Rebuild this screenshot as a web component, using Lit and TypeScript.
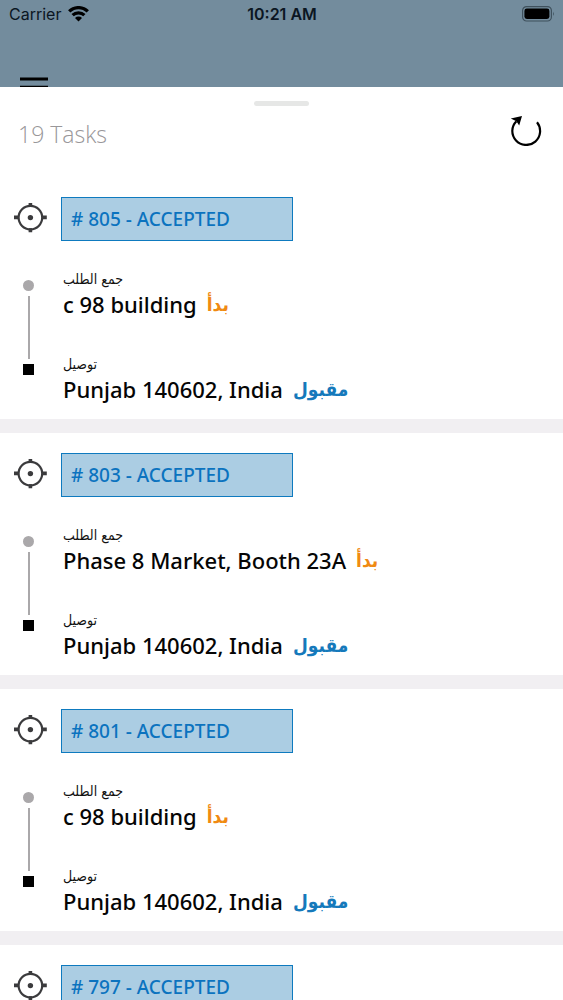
import { LitElement, html, css } from "lit";
import { customElement, property } from "lit/decorators.js";

interface Task {
  id: number;
  pickup: string;
  drop: string;
}

const TASKS: Task[] = [
  { id: 805, pickup: "c 98 building", drop: "Punjab 140602, India" },
  { id: 803, pickup: "Phase 8 Market, Booth 23A", drop: "Punjab 140602, India" },
  { id: 801, pickup: "c 98 building", drop: "Punjab 140602, India" },
  { id: 797, pickup: "c 98 building", drop: "Punjab 140602, India" },
];

@customElement("status-bar")
export class StatusBar extends LitElement {
  static styles = css`
    :host {
      display: grid;
      grid-template-columns: 1fr auto 1fr;
      align-items: center;
      height: 28px;
      padding: 0 8px 0 9px;
      font: 400 16px/20px Inter, sans-serif;
      color: #0b1622;
    }
    .carrier {
      display: flex;
      align-items: center;
      gap: 7px;
    }
    .time {
      font-size: 16px;
      font-weight: 600;
    }
    .battery {
      justify-self: end;
    }
    svg {
      display: block;
    }
  `;

  render() {
    return html`
      <div class="carrier">
        <span>Carrier</span>
        <svg width="21" height="16" viewBox="0 0 21 16" aria-hidden="true">
          <g fill="none" stroke="#000" stroke-width="3.2">
            <path d="M1.2 5.4a13.2 13.2 0 0 1 18.6 0" />
            <path d="M4.6 9.2a8.4 8.4 0 0 1 11.8 0" />
          </g>
          <path d="M7 12a5 5 0 0 1 7 0L10.5 15.4z" />
        </svg>
      </div>
      <span class="time">10:21 AM</span>
      <svg class="battery" width="33" height="16" viewBox="0 0 33 16" aria-hidden="true">
        <rect x="0.6" y="0.6" width="28.8" height="14.4" rx="4" fill="none" stroke="#3f515d" stroke-width="1.2" />
        <rect x="2.4" y="2.6" width="25" height="10.4" rx="2.4" />
        <path d="M31 5.6q1.6 2.2 0 4.4z" fill="#3f515d" />
      </svg>
    `;
  }
}

@customElement("task-card")
export class TaskCard extends LitElement {
  @property({ attribute: false }) task!: Task;

  static styles = css`
    :host {
      display: block;
      padding: 20px 14px 17px;
      background: #fff;
    }
    .head {
      display: grid;
      grid-template-columns: 47px 232px;
      align-items: center;
    }
    .target {
      display: block;
      margin-bottom: 3px;
    }
    .badge {
      box-sizing: border-box;
      height: 44px;
      padding: 0 9px;
      border: 1px solid #0e7abf;
      background: #abcde3;
      color: #0b73bf;
      font-size: 19px;
      line-height: 43px;
      font-weight: 500;
    }
    .route {
      display: grid;
      grid-template-columns: 29px 1fr;
      column-gap: 20px;
      margin-top: 26px;
    }
    .track {
      display: flex;
      flex-direction: column;
      align-items: center;
      gap: 5px;
      padding-top: 13px;
    }
    .dot {
      width: 11px;
      height: 11px;
      border-radius: 50%;
      background: #aaa8aa;
    }
    .line {
      width: 2px;
      height: 63px;
      background: #aaa8aa;
    }
    .square {
      width: 11px;
      height: 11px;
      background: #000;
    }
    .stops {
      display: grid;
      row-gap: 35px;
    }
    .label {
      width: fit-content;
      height: 24px;
      font: 400 14px/24px "DejaVu Sans Condensed", "DejaVu Sans", sans-serif;
      color: #111;
    }
    .place {
      display: flex;
      gap: 10px;
      height: 26px;
      font-size: 22px;
      line-height: 26px;
      font-weight: 500;
      color: #050505;
      white-space: nowrap;
    }
    .state {
      font: 700 19px/26px "DejaVu Sans Condensed", "DejaVu Sans", sans-serif;
    }
    .started {
      color: #f08a12;
    }
    .accepted {
      color: #1579bb;
    }
  `;

  render() {
    const { id, pickup, drop } = this.task;
    return html`
      <div class="head">
        <svg class="target" width="33" height="30" viewBox="0 0 33 30" aria-hidden="true">
          <circle cx="16.4" cy="14.6" r="11.8" fill="none" stroke="#3b3b3d" stroke-width="2.2" />
          <circle cx="16.4" cy="14.6" r="2.7" fill="#3b3b3d" />
          <path d="M16.4 0v4M16.4 25.2v4M0 14.4h4.6M28.2 14.4h4.6" fill="none" stroke="#3b3b3d" stroke-width="3.6" />
        </svg>
        <div class="badge"># ${id} - ACCEPTED</div>
      </div>
      <div class="route">
        <div class="track"><span class="dot"></span><span class="line"></span><span class="square"></span></div>
        <div class="stops">
          <div>
            <div class="label" lang="ar" dir="rtl">جمع الطلب</div>
            <div class="place"><span>${pickup}</span><span class="state started" lang="ar">بدأ</span></div>
          </div>
          <div>
            <div class="label" lang="ar" dir="rtl">توصيل</div>
            <div class="place"><span>${drop}</span><span class="state accepted" lang="ar">مقبول</span></div>
          </div>
        </div>
      </div>
    `;
  }
}

@customElement("app-root")
export class AppRoot extends LitElement {
  static styles = css`
    :host {
      display: flex;
      flex-direction: column;
      height: 100vh;
      overflow: hidden;
      background: #738c9d;
      font-family: "Noto Sans", "Open Sans", sans-serif;
    }
    .map {
      flex: none;
      height: 87px;
      overflow: hidden;
    }
    button {
      display: block;
      padding: 0;
      border: 0;
      background: none;
      cursor: pointer;
    }
    .menu {
      margin: 49px 0 0 20px;
    }
    svg {
      display: block;
    }
    .sheet {
      flex: 1;
      min-height: 0;
      display: flex;
      flex-direction: column;
      background: #fff;
    }
    .grip {
      flex: none;
      align-self: center;
      width: 55px;
      height: 5px;
      margin-top: 14px;
      border-radius: 3px;
      background: #e6e7e6;
    }
    header {
      flex: none;
      display: flex;
      justify-content: space-between;
      align-items: flex-start;
      padding: 8px 21px 0 18px;
      height: 63px;
    }
    h1 {
      margin: 4px 0 0;
      font-family: "Open Sans", sans-serif;
      font-size: 23px;
      line-height: 32px;
      font-weight: 300;
      color: #99979a;
    }
    .list {
      flex: 1;
      min-height: 0;
      overflow-y: auto;
      scrollbar-width: none;
      display: flex;
      flex-direction: column;
      gap: 14px;
      background: #f1eff2;
    }
    task-card {
      flex: none;
    }
  `;

  render() {
    return html`
      <div class="map">
        <status-bar></status-bar>
        <button class="menu" aria-label="Menu">
          <svg width="28" height="22" viewBox="0 0 28 22"><path d="M0 2h28M0 10.3h28M0 18.6h28" stroke="#000" stroke-width="3" /></svg>
        </button>
      </div>
      <main class="sheet">
        <div class="grip"></div>
        <header>
          <h1>19 Tasks</h1>
          <button aria-label="Refresh">
            <svg width="32" height="32" viewBox="0 0 32 32">
              <path d="M27 8.3A13.9 13.9 0 1 1 6.4 7.2" fill="none" stroke="#000" stroke-width="2.2" />
              <path d="M.8 4.4L12 2 9.2 11.6 6.4 7.2z" />
            </svg>
          </button>
        </header>
        <div class="list">${TASKS.map((task) => html`<task-card .task=${task}></task-card>`)}</div>
      </main>
    `;
  }
}
